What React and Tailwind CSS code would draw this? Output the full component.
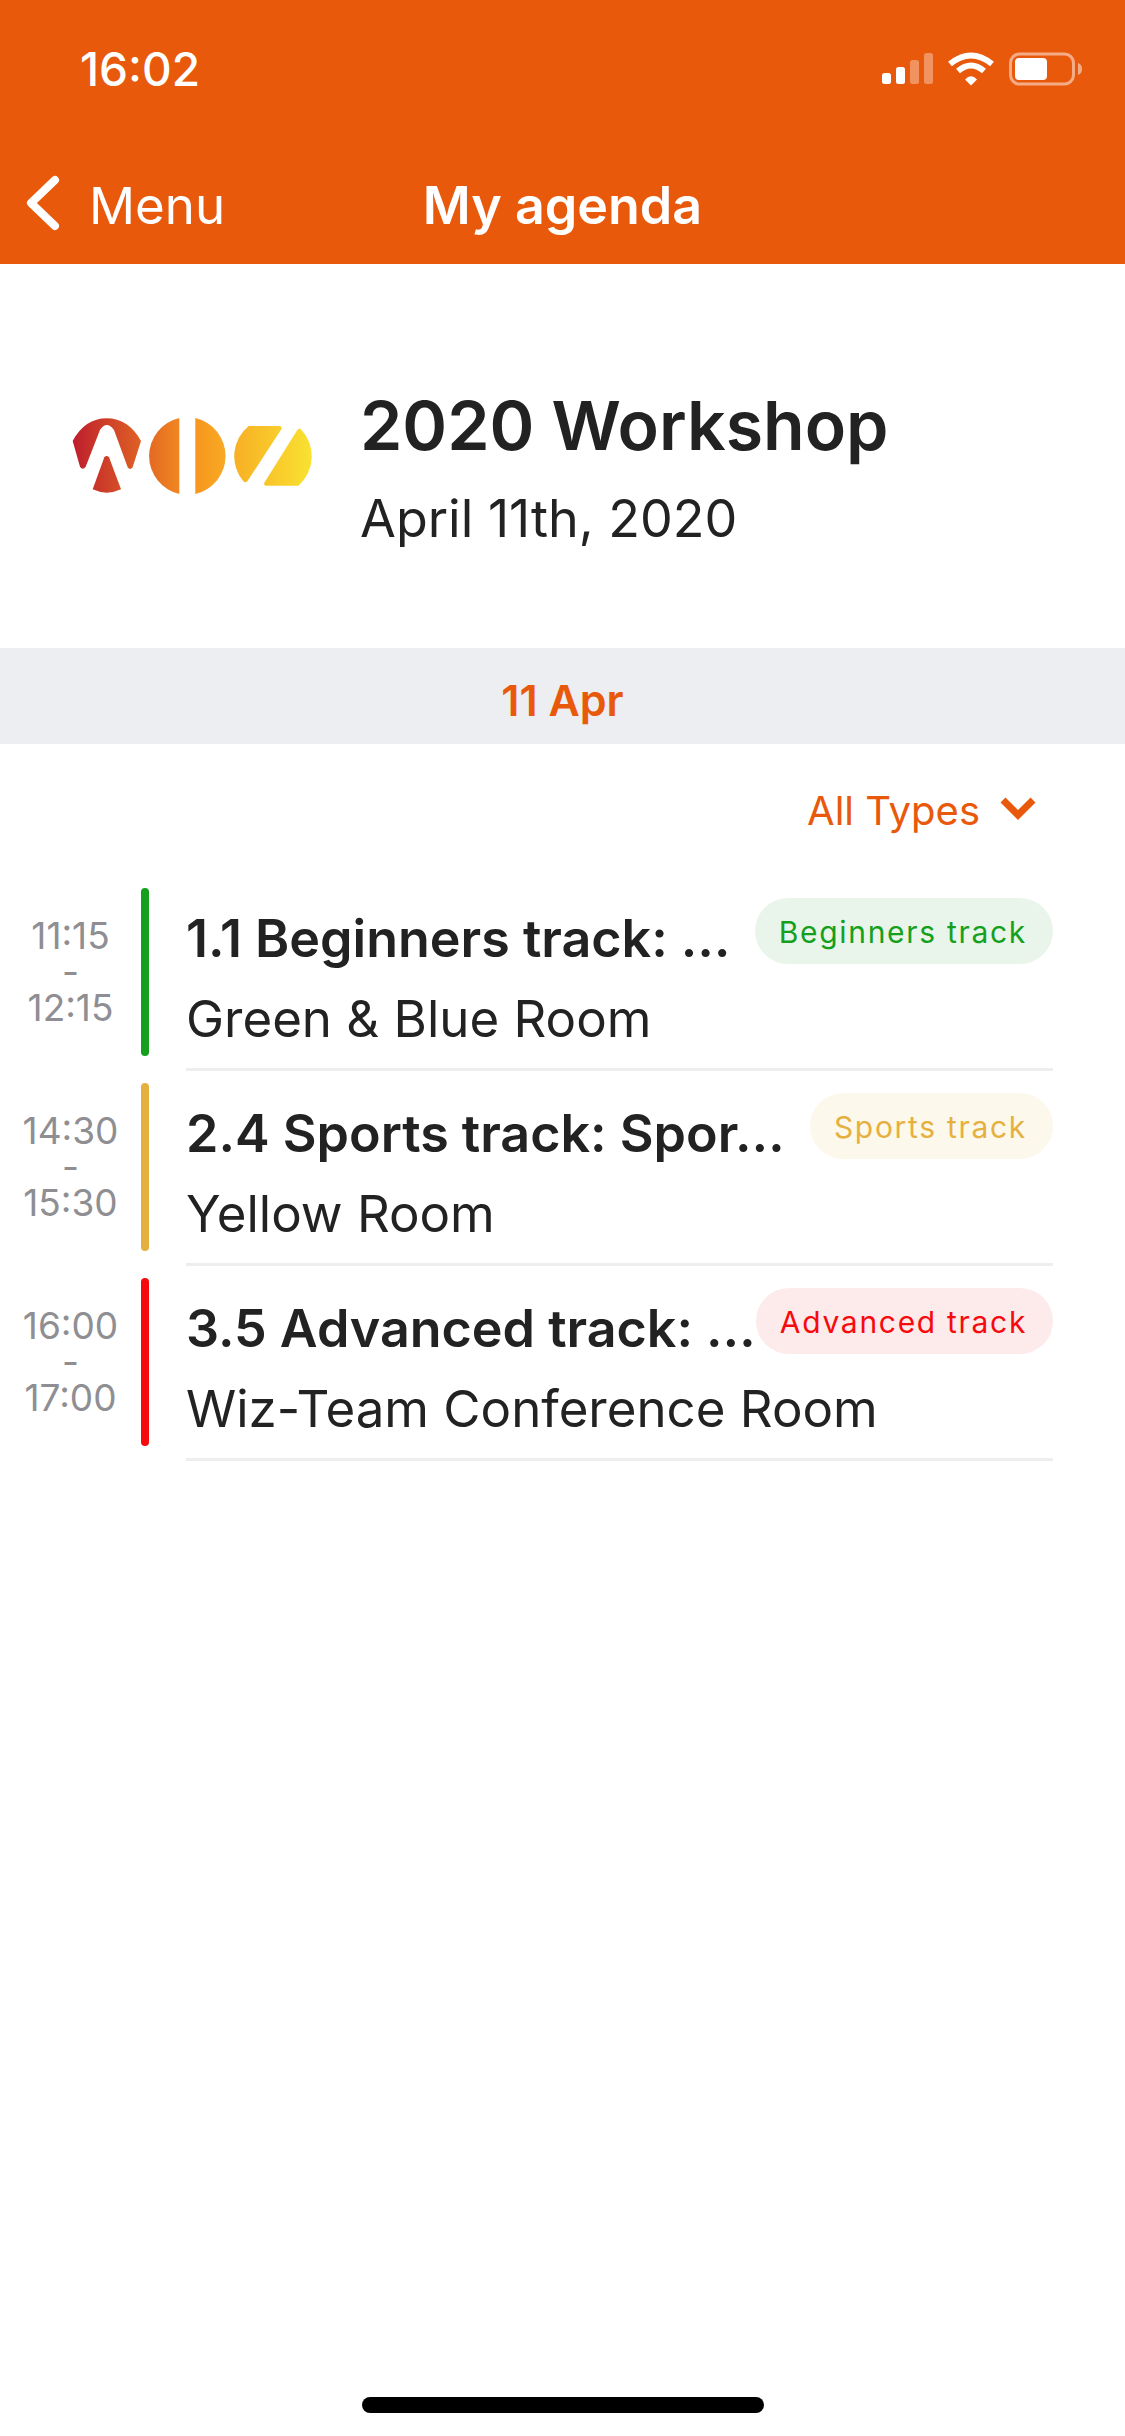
const INTER = "font-['Inter','Noto_Sans',sans-serif]";

const sessions = [
  {
    start: "11:15",
    end: "12:15",
    title: "1.1 Beginners track: …",
    room: "Green & Blue Room",
    tag: "Beginners track",
    bar: "bg-[#14a01c]",
    text: "text-[#14a01c]",
    pill: "bg-[#e9f5eb]",
  },
  {
    start: "14:30",
    end: "15:30",
    title: "2.4 Sports track: Spor…",
    room: "Yellow Room",
    tag: "Sports track",
    bar: "bg-[#e6b040]",
    text: "text-[#e6b040]",
    pill: "bg-[#fdf8ec]",
  },
  {
    start: "16:00",
    end: "17:00",
    title: "3.5 Advanced track: …",
    room: "Wiz-Team Conference Room",
    tag: "Advanced track",
    bar: "bg-[#f60a0d]",
    text: "text-[#f60a0d]",
    pill: "bg-[#fdeaea]",
  },
];

function StatusIcons() {
  return (
    <svg width="200" height="34" viewBox="0 0 200 34" fill="none">
      <rect x="0" y="21" width="9" height="11" rx="2.5" fill="#fff" />
      <rect x="14" y="15" width="9" height="17" rx="2.5" fill="#fff" />
      <rect x="28" y="8" width="9" height="24" rx="2.5" fill="#fff" fillOpacity="0.35" />
      <rect x="42" y="1" width="9" height="31" rx="2.5" fill="#fff" fillOpacity="0.35" />
      <path d="M68 12 Q89 -5 110 12" stroke="#fff" strokeWidth="6" />
      <path d="M76 19 Q89 8 102 19" stroke="#fff" strokeWidth="6" />
      <path d="M83 27.5 Q89 21 95 27.5 L89 33.5 Z" fill="#fff" />
      <rect x="128.5" y="2" width="63" height="30" rx="9" stroke="#fff" strokeOpacity="0.5" strokeWidth="3" />
      <rect x="133" y="6" width="32" height="22" rx="4" fill="#fff" />
      <path d="M196 11 C199 12 200 14 200 17 C200 20 199 22 196 23 Z" fill="#fff" fillOpacity="0.5" />
    </svg>
  );
}

function Logo() {
  return (
    <svg width="290" height="130" viewBox="0 0 870 390">
      <defs>
        <linearGradient id="logoFill" gradientUnits="userSpaceOnUse" x1="68" y1="0" x2="786" y2="0">
          <stop offset="0" stopColor="#be1e2d" />
          <stop offset="0.5" stopColor="#f7941e" />
          <stop offset="1" stopColor="#f9e231" />
        </linearGradient>
      </defs>
      <g fill="url(#logoFill)">
        <path d="M68 183 Q105 115 170 115 Q235 115 273 183 L248 262 Q240 272 233 262 L192 150 Q170 120 150 150 L107 260 Q98 272 90 260 Z" />
        <path d="M163 232 Q170 224 177 232 L213 328 Q170 348 128 328 Z" />
        <path d="M388 114 A117 117 0 0 0 388 342 Z" />
        <path d="M436 114 A117 117 0 0 1 436 342 Z" />
        <path d="M596 138 L690 138 Q697 140 694 148 L592 304 Q586 310 580 304 A117 117 0 0 1 596 138 Z" />
        <path d="M752 147 A117 117 0 0 1 745 317 L648 317 Q640 315 643 308 L742 150 Q747 144 752 147 Z" />
      </g>
    </svg>
  );
}

function SessionRow({ session }) {
  return (
    <div className="flex pt-[12px]">
      <div className="w-[141px] h-[168px] flex flex-col items-center justify-center text-[37px] leading-[36px] text-[#8e8e93]">
        <span>{session.start}</span>
        <span>-</span>
        <span>{session.end}</span>
      </div>
      <div className={`w-[8px] h-[168px] rounded-full ${session.bar}`} />
      <div className="ml-[37px] w-[867px]">
        <div className="h-[183px] border-b-[3px] border-[#eeeeee] box-border">
          <div className="flex items-start justify-between">
            <div className="pt-[20px] text-[52px] leading-[62px] font-semibold text-[#222222] whitespace-nowrap">
              {session.title}
            </div>
            <div className={`mt-[10px] h-[66px] pl-[24px] pr-[26px] pt-[2px] rounded-full flex items-center text-[30px] tracking-[1.7px] shrink-0 ${session.pill} ${session.text}`}>
              {session.tag}
            </div>
          </div>
          <div className="mt-[18px] text-[51px] leading-[62px] text-[#222222]">{session.room}</div>
        </div>
      </div>
    </div>
  );
}

export default function App() {
  return (
    <div className={`w-[1125px] h-[2436px] bg-white flex flex-col relative ${INTER}`}>
      <header className="h-[264px] bg-[#e8590c] text-white shrink-0">
        <div className="h-[132px] flex items-center justify-between pl-[80px] pr-[43px] pt-[6px]">
          <span className="text-[46px] font-medium">16:02</span>
          <StatusIcons />
        </div>
        <div className="h-[132px] relative flex items-center justify-center pt-[16px]">
          <svg className="absolute left-[24px] top-[40px]" width="40" height="62" viewBox="0 0 40 62" fill="none">
            <path d="M31 8 L7 31 L31 54" stroke="#fff" strokeWidth="8" strokeLinecap="round" strokeLinejoin="round" />
          </svg>
          <span className="absolute left-[89px] top-[44px] text-[51px] leading-[60px]">Menu</span>
          <span className="text-[52px] font-semibold">My agenda</span>
        </div>
      </header>

      <section className="h-[384px] flex items-center shrink-0">
        <div className="ml-[50px] mb-[22px]">
          <Logo />
        </div>
        <div className="ml-[20px] mt-[20px] text-[#222222]">
          <div className="text-[68px] leading-[86px] font-semibold">2020 Workshop</div>
          <div className="text-[52px] leading-[62px] mt-[20px]">April 11th, 2020</div>
        </div>
      </section>

      <div className="h-[96px] pt-[8px] bg-[#eceef1] flex items-center justify-center text-[43px] font-semibold text-[#e8590c] shrink-0">
        11 Apr
      </div>

      <div className="h-[132px] pt-[2px] flex items-center justify-end pr-[89px] text-[40px] text-[#e8590c] shrink-0">
        <span>All Types</span>
        <svg className="ml-[20px] mb-[7px]" width="36" height="24" viewBox="0 0 36 24" fill="none">
          <path d="M3 4 L18 19 L33 4" stroke="#e8590c" strokeWidth="7" />
        </svg>
      </div>

      <div>
        {sessions.map((session) => (
          <SessionRow key={session.start} session={session} />
        ))}
      </div>

      <div className="absolute left-[362px] top-[2397px] w-[402px] h-[16px] rounded-full bg-black" />
    </div>
  );
}
